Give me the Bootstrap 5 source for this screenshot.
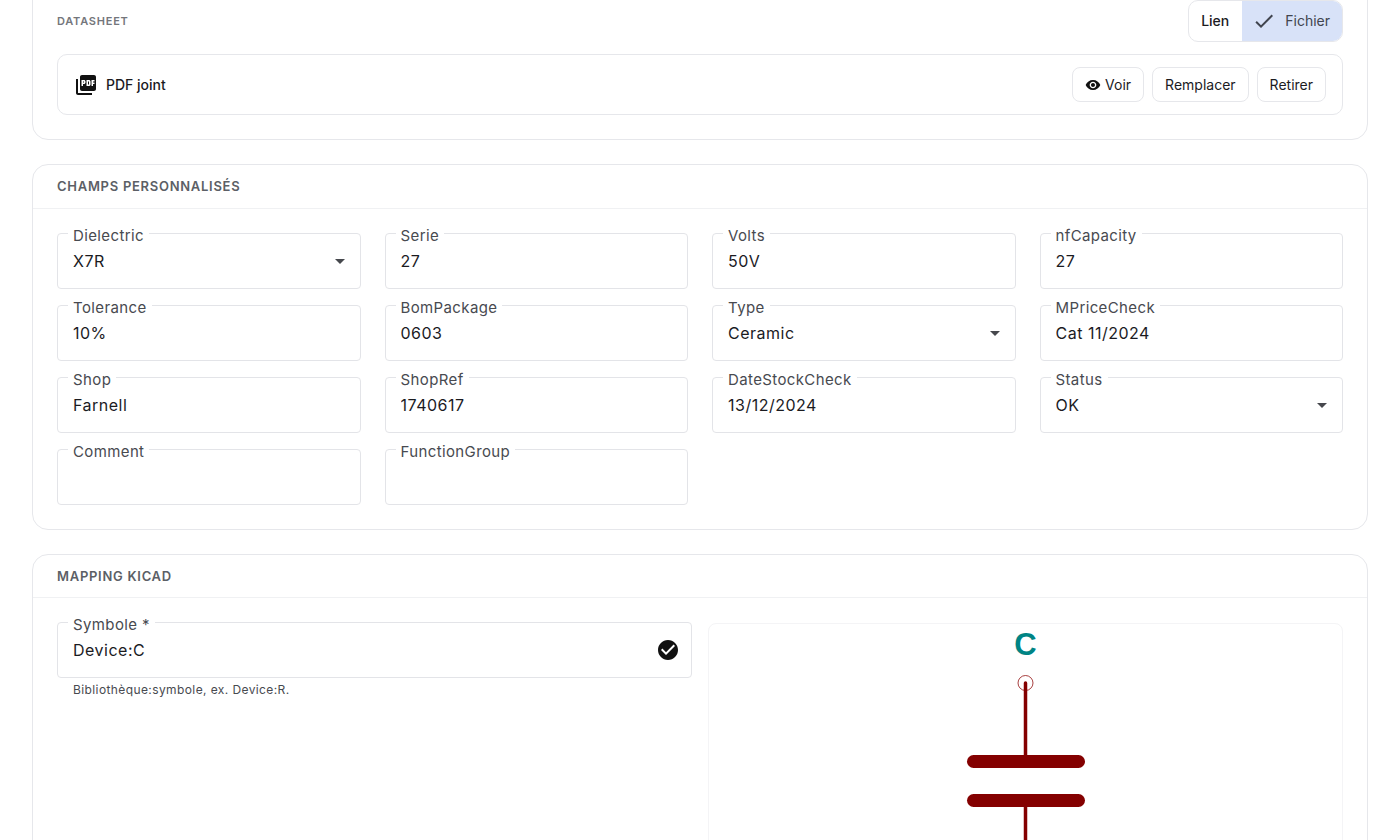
<!DOCTYPE html>
<html lang="fr">
<head>
<meta charset="utf-8">
<title>Composant</title>
<link href="https://cdn.jsdelivr.net/npm/bootstrap@5.3.0/dist/css/bootstrap.min.css" rel="stylesheet">
<style>
html, body { height: 840px; overflow: hidden; }
body { font-family: "Inter", "Liberation Sans", sans-serif; color: #1b1b1f; background: #fff; }
.page-wrap { padding: 0 32px; margin-top: -25px; display: flex; flex-direction: column; gap: 24px; }
.panel { border: 1px solid #e6e7eb; border-radius: 16px; background: #fff; }
.panel-head { height: 44px; padding: 0 24px; border-bottom: 1px solid #f0f1f3; font-size: 13px; font-weight: 600; letter-spacing: .72px; color: #5c5f66; text-transform: uppercase; }
.panel-head-tight { height: 43px; padding-top: 1px; }
.panel-body { padding: 24px; }
.sheet-title { font-size: 11px; font-weight: 600; letter-spacing: .77px; color: #74767b; text-transform: uppercase; }
.seg { height: 42px; border: 1px solid #e6e7eb; border-radius: 10px; overflow: hidden; font-size: 14px; font-weight: 500; }
.seg-item { padding: 0 13px 2px 12px; }
.seg-on { background: #d8e2f8; color: #41454f; font-weight: 400; padding: 0 12px 2px 10px; }
.seg-on svg { margin-right: 9px; margin-top: 2px; }
.pdf-box { height: 61px; margin-top: 12px; border: 1px solid #e6e7eb; border-radius: 10px; padding: 0 16px; font-size: 14px; font-weight: 500; }
.ghost-btn { height: 35px; padding: 0 12px; border: 1px solid #e6e7eb; border-radius: 8px; background: #fff; font-size: 14px; color: #1b1b1f; }
.grid-4 { display: grid; grid-template-columns: repeat(4, 1fr); gap: 16px 24px; }
.fld { position: relative; }
.fld .form-control, .fld .form-select { height: 56px; padding: 0 15px; border: 1px solid #e3e4e8; border-radius: 4px; font-size: 16px; letter-spacing: .5px; color: #1b1b1f; box-shadow: none; }
.fld .form-select { background-image: url("data:image/svg+xml,%3Csvg xmlns='http://www.w3.org/2000/svg' width='10' height='5'%3E%3Cpath d='M0 0h10L5 5z' fill='%2346484d'/%3E%3C/svg%3E"); background-size: 10px 5px; background-position: right 15px center; }
.fld-label { position: absolute; left: 11px; top: -7px; padding: 0 5px; background: #fff; font-size: 15px; line-height: 19px; letter-spacing: .38px; color: #484a50; }
.fld-mark { position: absolute; right: 12px; top: 16px; }
.map-row { display: grid; grid-template-columns: 635px 635px; column-gap: 16px; }
.hint { font-size: 12px; letter-spacing: .4px; color: #484a50; padding: 4px 16px 0; line-height: 16px; }
.sym-box { height: 320px; border: 1px solid #f4f4f6; border-radius: 8px; margin-top: 1px; }
.sym-box svg { display: block; }
</style>
</head>
<body>
<div class="page-wrap">

  <section class="panel panel-body">
    <div class="d-flex justify-content-between align-items-center">
      <span class="sheet-title">Datasheet</span>
      <div class="seg d-flex">
        <div class="seg-item d-flex align-items-center">Lien</div>
        <div class="seg-on d-flex align-items-center">
          <svg width="24" height="24" viewBox="0 0 24 24" fill="#41454f"><path d="M9 16.170L4.830 12l-1.420 1.410L9 19 21 7l-1.410-1.410z"/></svg>Fichier
        </div>
      </div>
    </div>
    <div class="pdf-box d-flex align-items-center justify-content-between">
      <div class="d-flex align-items-center gap-2">
        <svg width="24" height="24" viewBox="0 0 24 24" fill="#111"><path d="M20 2H8c-1.100 0-2 .9-2 2v12c0 1.100.9 2 2 2h12c1.100 0 2-.9 2-2V4c0-1.100-.9-2-2-2zm-8.500 7.500c0 .83-.67 1.500-1.500 1.500H9v2H7.500V7H10c.83 0 1.500.67 1.500 1.500v1zm5 2c0 .83-.67 1.500-1.500 1.500h-2.500V7H15c.83 0 1.500.67 1.500 1.500v3zm4-3H19v1h1.500V11H19v2h-1.500V7h3v1.500zM9 9.500h1v-1H9v1zM4 6H2v14c0 1.100.9 2 2 2h14v-2H4V6zm10 5.500h1v-3h-1v3z"/></svg>
        <span>PDF joint</span>
      </div>
      <div class="d-flex gap-2">
        <button class="ghost-btn d-flex align-items-center gap-1" type="button">
          <svg width="16" height="16" viewBox="0 0 24 24" fill="#111"><path d="M12 4.500C7 4.500 2.730 7.610 1 12c1.730 4.390 6 7.500 11 7.500s9.270-3.110 11-7.500c-1.730-4.390-6-7.500-11-7.500zM12 17c-2.760 0-5-2.240-5-5s2.240-5 5-5 5 2.240 5 5-2.240 5-5 5zm0-8c-1.660 0-3 1.340-3 3s1.340 3 3 3 3-1.340 3-3-1.340-3-3-3z"/></svg>Voir
        </button>
        <button class="ghost-btn" type="button">Remplacer</button>
        <button class="ghost-btn" type="button">Retirer</button>
      </div>
    </div>
  </section>

  <section class="panel">
    <div class="panel-head d-flex align-items-center">Champs personnalisés</div>
    <div class="panel-body grid-4">
      <div class="fld"><select class="form-select"><option>X7R</option></select><label class="fld-label">Dielectric</label></div>
      <div class="fld"><input class="form-control" value="27"><label class="fld-label">Serie</label></div>
      <div class="fld"><input class="form-control" value="50V"><label class="fld-label">Volts</label></div>
      <div class="fld"><input class="form-control" value="27"><label class="fld-label">nfCapacity</label></div>
      <div class="fld"><input class="form-control" value="10%"><label class="fld-label">Tolerance</label></div>
      <div class="fld"><input class="form-control" value="0603"><label class="fld-label">BomPackage</label></div>
      <div class="fld"><select class="form-select"><option>Ceramic</option></select><label class="fld-label">Type</label></div>
      <div class="fld"><input class="form-control" value="Cat 11/2024"><label class="fld-label">MPriceCheck</label></div>
      <div class="fld"><input class="form-control" value="Farnell"><label class="fld-label">Shop</label></div>
      <div class="fld"><input class="form-control" value="1740617"><label class="fld-label">ShopRef</label></div>
      <div class="fld"><input class="form-control" value="13/12/2024"><label class="fld-label">DateStockCheck</label></div>
      <div class="fld"><select class="form-select"><option>OK</option></select><label class="fld-label">Status</label></div>
      <div class="fld"><input class="form-control" value=""><label class="fld-label">Comment</label></div>
      <div class="fld"><input class="form-control" value=""><label class="fld-label">FunctionGroup</label></div>
    </div>
  </section>

  <section class="panel">
    <div class="panel-head panel-head-tight d-flex align-items-center">Mapping KiCad</div>
    <div class="panel-body map-row">
      <div>
        <div class="fld">
          <input class="form-control" value="Device:C"><label class="fld-label">Symbole *</label>
          <svg class="fld-mark" width="24" height="24" viewBox="0 0 24 24" fill="#111"><path d="M12 2C6.480 2 2 6.480 2 12s4.480 10 10 10 10-4.480 10-10S17.520 2 12 2zm-2 15l-5-5 1.410-1.410L10 14.170l7.590-7.590L19 8l-9 9z"/></svg>
        </div>
        <div class="hint">Bibliothèque:symbole, ex. Device:R.</div>
      </div>
      <div class="sym-box">
        <svg width="633" height="318" viewBox="0 0 633 318">
          <text x="316.500" y="31" text-anchor="middle" font-family="Liberation Sans, sans-serif" font-weight="700" font-size="31" fill="#008484">C</text>
          <circle cx="316.500" cy="59" r="7.500" fill="none" stroke="#8b0000" stroke-opacity=".75" stroke-width="1"/>
          <path d="M316.500 59V135M316.500 176V318" stroke="#840000" stroke-width="3.500" fill="none" stroke-linecap="round"/>
          <rect x="258" y="131" width="118" height="13" rx="6.500" fill="#840000"/>
          <rect x="258" y="170" width="118" height="13" rx="6.500" fill="#840000"/>
        </svg>
      </div>
    </div>
  </section>

</div>
<script src="https://cdn.jsdelivr.net/npm/bootstrap@5.3.0/dist/js/bootstrap.bundle.min.js"></script>
</body>
</html>
